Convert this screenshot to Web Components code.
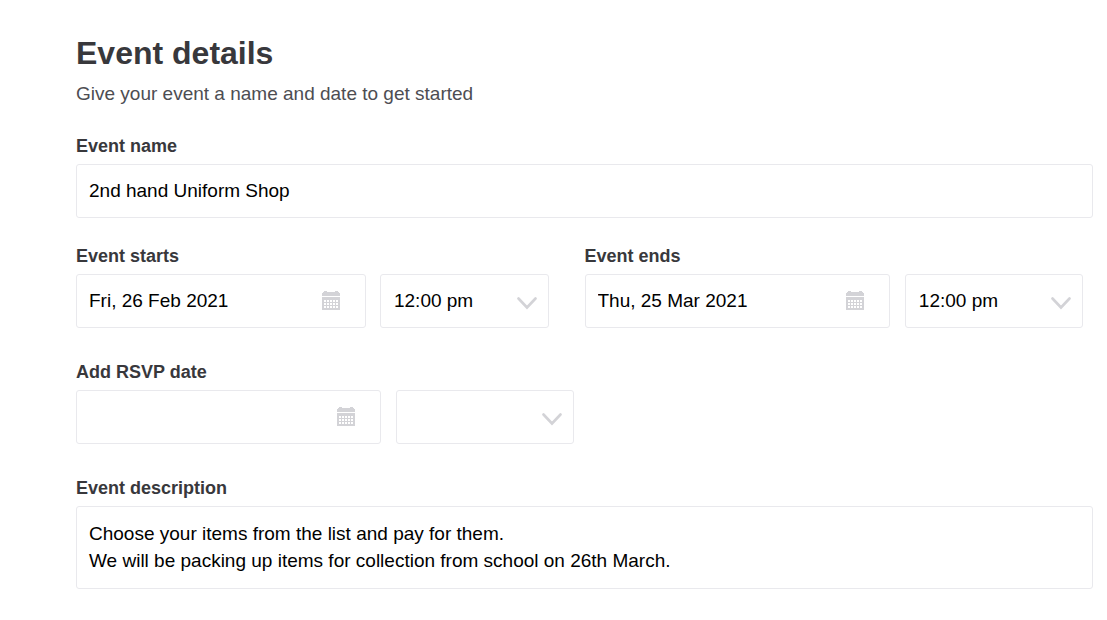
<!DOCTYPE html>
<html lang="en">
<head>
<meta charset="utf-8">
<meta name="viewport" content="width=device-width, initial-scale=1">
<title>Event details</title>
<style>
  body {
    margin: 0;
    background: #fff;
    color: #38383c;
    font-family: "Liberation Sans", Arial, sans-serif;
    --line: #e9e9ed;
    --icon: #d3d3d7;
    --ink: #000;
    --muted: #4d4d52;
  }
</style>
</head>
<body>
<event-form></event-form>
<script>
const controlCss = `
  :host { display: block; min-width: 0; }
  * { box-sizing: border-box; }
  label { display: block; margin-bottom: 5px; font-size: 18px; font-weight: bold; line-height: 26px; }
  input, select, textarea {
    display: block; width: 100%; margin: 0; padding: 0 12px;
    border: 1px solid var(--line); border-radius: 3px; background: #fff;
    color: var(--ink); font-family: inherit; font-size: 19px; outline: none;
  }
  input, select { height: 54px; }
  select { appearance: none; padding: 0 40px 2px 13px; }
  .box { position: relative; }
  .box svg { position: absolute; pointer-events: none; display: block; }
`;

class TextField extends HTMLElement {
  connectedCallback() {
    const root = this.attachShadow({ mode: 'open' });
    root.innerHTML = `<style>${controlCss}</style>
      <label for="c"></label><input id="c" type="text">`;
    root.querySelector('label').textContent = this.getAttribute('label');
    root.querySelector('input').value = this.getAttribute('value') || '';
  }
}
customElements.define('text-field', TextField);

class NoteField extends HTMLElement {
  connectedCallback() {
    const root = this.attachShadow({ mode: 'open' });
    root.innerHTML = `<style>${controlCss}
        textarea { padding-top: 13px; padding-bottom: 14px; line-height: 27px; resize: none; overflow: hidden; height: 83px; }
      </style>
      <label for="c"></label><textarea id="c" rows="2"></textarea>`;
    root.querySelector('label').textContent = this.getAttribute('label');
    root.querySelector('textarea').value = this.textContent.trim();
  }
}
customElements.define('note-field', NoteField);

class DateTimeField extends HTMLElement {
  connectedCallback() {
    const root = this.attachShadow({ mode: 'open' });
    root.innerHTML = `<style>${controlCss}
        .row { display: grid; grid-template-columns: 60% 35%; column-gap: 3%; }
        .date input { padding-right: 48px; }
        .calendar { right: 26px; top: 17px; }
        .chevron { right: 12px; top: 22px; }
      </style>
      <label for="date"></label>
      <div class="row">
        <div class="box date">
          <input id="date" type="text">
          <svg class="calendar" width="18" height="19" viewBox="0 0 18 19" aria-hidden="true">
            <path fill="var(--icon)" d="M1 1H2V0H5V1H13V0H16V1H17V2H18V5H0V2H1Z"/>
            <path fill="var(--icon)" fill-rule="evenodd" d="M0 6H18V19H0Z
              M2 9H4V11H2Z M5 9H7V11H5Z M8 9H10V11H8Z M11 9H13V11H11Z M14 9H16V11H14Z
              M2 12H4V14H2Z M5 12H7V14H5Z M8 12H10V14H8Z M11 12H13V14H11Z M14 12H16V14H14Z
              M2 15H4V17H2Z M5 15H7V17H5Z M8 15H10V17H8Z M11 15H13V17H11Z M14 15H16V17H14Z"/>
          </svg>
        </div>
        <div class="box time">
          <select><option></option></select>
          <svg class="chevron" width="20" height="14" viewBox="0 0 20 14" aria-hidden="true">
            <path d="M1.5 2.5L10 11.5L18.5 2.5" fill="none" stroke="var(--icon)" stroke-width="2.6" stroke-linecap="round"/>
          </svg>
        </div>
      </div>`;
    const label = this.getAttribute('label');
    root.querySelector('label').textContent = label;
    root.querySelector('input').value = this.getAttribute('date') || '';
    root.querySelector('select').setAttribute('aria-label', label + ' time');
    root.querySelector('option').textContent = this.getAttribute('time') || '';
  }
}
customElements.define('date-time-field', DateTimeField);

class EventForm extends HTMLElement {
  connectedCallback() {
    this.attachShadow({ mode: 'open' }).innerHTML = `<style>
        :host { display: block; padding: 33px 14px 31px 76px; }
        h1 { margin: 0 0 8px; font-size: 32px; line-height: 40px; }
        p { margin: 0 0 26px; color: var(--muted); font-size: 19px; line-height: 26px; }
        .dates { display: grid; grid-template-columns: 1fr 1fr; margin: 25px 0 31px; }
        .start { padding-right: 26px; }
        .rsvp { width: 50%; margin-bottom: 31px; }
      </style>
      <form>
        <h1>Event details</h1>
        <p>Give your event a name and date to get started</p>
        <text-field label="Event name" value="2nd hand Uniform Shop"></text-field>
        <div class="dates">
          <date-time-field class="start" label="Event starts" date="Fri, 26 Feb 2021" time="12:00 pm"></date-time-field>
          <date-time-field label="Event ends" date="Thu, 25 Mar 2021" time="12:00 pm"></date-time-field>
        </div>
        <date-time-field class="rsvp" label="Add RSVP date"></date-time-field>
        <note-field label="Event description">Choose your items from the list and pay for them.
We will be packing up items for collection from school on 26th March.</note-field>
      </form>`;
  }
}
customElements.define('event-form', EventForm);
</script>
</body>
</html>
